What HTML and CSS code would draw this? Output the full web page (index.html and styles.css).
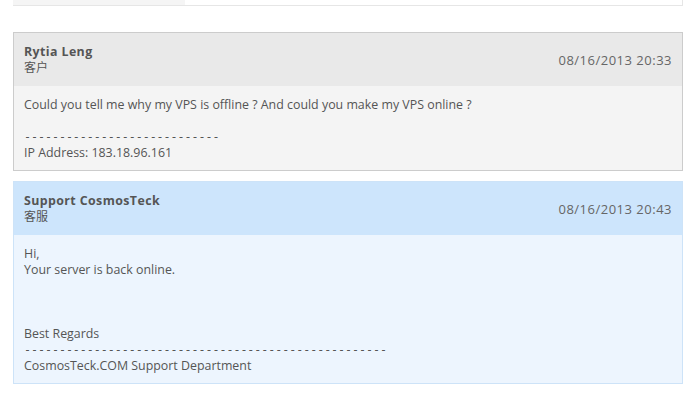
FILE: index.html
```html
<!DOCTYPE html>
<html>
<head>
<meta charset="utf-8">
<link rel="stylesheet" href="styles.css">
</head>
<body>
<div class="page">
  <div class="tabs">
    <div class="tab-active"></div>
    <div class="tab-rest"></div>
  </div>
  <div class="msg client">
    <div class="msg-head">
      <div class="who">
        <div class="name">Rytia Leng</div>
        <div class="role">客户</div>
      </div>
      <div class="date">08/16/2013 20:33</div>
    </div>
    <div class="msg-body">Could you tell me why my VPS is offline ? And could you make my VPS online ?<br><br><span class="rule">----------------------------</span><br>IP Address: 183.18.96.161</div>
  </div>
  <div class="msg staff">
    <div class="msg-head">
      <div class="who">
        <div class="name">Support CosmosTeck</div>
        <div class="role">客服</div>
      </div>
      <div class="date">08/16/2013 20:43</div>
    </div>
    <div class="msg-body">Hi,<br>Your server is back online.<br><br><br><br>Best Regards<br><span class="rule">----------------------------------------------------</span><br>CosmosTeck.COM Support Department</div>
  </div>
</div>
</body>
</html>
```

FILE: styles.css
```css
html, body {
  margin: 0;
  padding: 0;
  background: #fff;
}
body {
  font-family: "Open Sans", "Noto Sans CJK SC", sans-serif;
  font-size: 12.4px;
  line-height: 16px;
  color: #555;
}
.page {
  padding: 0 14px 0 13px;
}
.tabs {
  display: flex;
  height: 5px;
  border-bottom: 1px solid #e6e6e6;
  border-right: 1px solid #e6e6e6;
  margin-bottom: 26px;
}
.tab-active {
  width: 172px;
  background: #f5f5f5;
}
.tab-rest {
  flex: 1;
  background: #fff;
}
.msg {
  border: 1px solid #ccc;
  margin-bottom: 10px;
}
.msg-head {
  display: flex;
  justify-content: space-between;
  align-items: center;
  padding: 11px 10px 10px;
}
.msg-body {
  padding: 11px 10px 9px;
}
.rule {
  font-family: "DejaVu Sans Mono", monospace;
  font-size: 11.6px;
}
.client .msg-head { background: #e9e9e9; }
.client .msg-body { background: #f4f4f4; }
.staff { border-color: #cde3f8; }
.staff .msg-head { background: #cde5fc; }
.staff .msg-body { background: #edf5fe; }
.name {
  font-weight: bold;
  color: #555;
  letter-spacing: 0.4px;
}
.role {
  color: #555;
  font-size: 12px;
}
.date {
  color: #666;
  font-size: 13px;
  letter-spacing: 0.5px;
}
```
